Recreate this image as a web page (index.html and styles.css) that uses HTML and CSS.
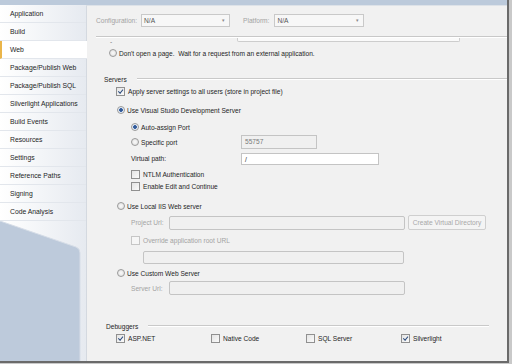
FILE: index.html
```html
<!DOCTYPE html>
<html lang="en">
<head>
  <meta charset="UTF-8">
  <title>Web properties</title>
  <link rel="stylesheet" href="styles.css">
</head>
<body>
  <div class="window">
    <div class="topbar"></div>
    <div class="frame">
      <nav class="sidebar">
        <ul class="tabs">
          <li>Application</li>
          <li>Build</li>
          <li class="active">Web</li>
          <li>Package/Publish Web</li>
          <li>Package/Publish SQL</li>
          <li>Silverlight Applications</li>
          <li>Build Events</li>
          <li>Resources</li>
          <li>Settings</li>
          <li>Reference Paths</li>
          <li>Signing</li>
          <li>Code Analysis</li>
        </ul>
        <div class="fold">
          <svg width="86" height="140" viewBox="0 0 86 140">
            <path d="M0 0 L76 26 Q80 27.5 80 32 L80 140 L0 140 Z" fill="#bdcadb"/>
            <path d="M0 0 L76 26 Q80 27.5 80 32 L80 140" fill="none" stroke="#d6dde7" stroke-width="1"/>
          </svg>
        </div>
      </nav>
      <main class="page">
        <div class="toolbar">
          <span class="muted">Configuration:</span>
          <div class="select config">N/A<span class="caret">&#9662;</span></div>
          <span class="muted">Platform:</span>
          <div class="select platform">N/A<span class="caret">&#9662;</span></div>
        </div>
        <div class="rule"></div>
        <div class="scrolled">
          <span class="dash">-</span>
          <div class="cutbox"></div>
        </div>

        <div class="row dont"><span class="radio"></span>Don't open a page.&nbsp; Wait for a request from an external application.</div>

        <div class="group servers"><span>Servers</span><div class="line"></div></div>
        <div class="row apply"><span class="check on"></span>Apply server settings to all users (store in project file)</div>
        <div class="row vs"><span class="radio on"></span>Use Visual Studio Development Server</div>
        <div class="row sub auto"><span class="radio on"></span>Auto-assign Port</div>
        <div class="row sub port">
          <span class="label"><span class="radio"></span>Specific port</span>
          <div class="field off w-port">55757</div>
        </div>
        <div class="row sub vpath">
          <span class="label">Virtual path:</span>
          <div class="field w-vpath">/</div>
        </div>
        <div class="row sub ntlm"><span class="check"></span>NTLM Authentication</div>
        <div class="row sub edit"><span class="check"></span>Enable Edit and Continue</div>

        <div class="row iis"><span class="radio"></span>Use Local IIS Web server</div>
        <div class="row sub url">
          <span class="label short muted">Project Url:</span>
          <div class="field off w-url"></div>
          <div class="button">Create Virtual Directory</div>
        </div>
        <div class="row sub override muted"><span class="check dis"></span>Override application root URL</div>
        <div class="row sub rooturl"><div class="field off w-root"></div></div>
        <div class="row custom"><span class="radio"></span>Use Custom Web Server</div>
        <div class="row sub server">
          <span class="label short muted">Server Url:</span>
          <div class="field off w-url"></div>
        </div>

        <div class="group debuggers"><span>Debuggers</span><div class="line"></div></div>
        <div class="row debug">
          <span class="opt"><span class="check on"></span>ASP.NET</span>
          <span class="opt"><span class="check"></span>Native Code</span>
          <span class="opt"><span class="check"></span>SQL Server</span>
          <span class="opt"><span class="check on"></span>Silverlight</span>
        </div>
      </main>
    </div>
  </div>
</body>
</html>
```

FILE: styles.css
```css
body {
  margin: 0;
  background: #c9c9c9;
  font-family: "Liberation Sans", Arial, sans-serif;
  font-size: 6.6px;
  color: #1e1e1e;
}
.window {
  width: 507px;
  height: 361px;
  border-right: 2px solid #6a6a6a;
  border-bottom: 2px solid #6a6a6a;
  display: flex;
  flex-direction: column;
  background: #f1f1f1;
  overflow: hidden;
}
.topbar {
  height: 5px;
  background: #bccadb;
}
.frame {
  flex: 1;
  display: flex;
}
.sidebar {
  width: 86px;
  display: flex;
  flex-direction: column;
  background: linear-gradient(to right, #ffffff, #e6eaf0);
}
.tabs {
  list-style: none;
  margin: 0;
  padding: 0;
}
.tabs li {
  height: 17px;
  line-height: 17px;
  padding-left: 10px;
  border-bottom: 1px solid #e2e6ec;
  white-space: nowrap;
  font-size: 6.8px;
}
.tabs li.active {
  background: #ffffff;
  border-left: 2px solid #eab54a;
  padding-left: 8px;
  margin-right: -1px;
  position: relative;
}
.fold {
  flex: 1;
  overflow: hidden;
}
.fold svg {
  display: block;
}
.page {
  flex: 1;
  border-left: 1px solid #d4d9e0;
  border-top: 1px solid #dde2e8;
  padding-left: 9px;
}
.muted {
  color: #a3a3a3;
}
.toolbar {
  display: flex;
  align-items: center;
  height: 13px;
  margin-top: 8px;
}
.select {
  height: 11px;
  line-height: 11px;
  border: 1px solid #c9c9c9;
  background: #f7f7f7;
  padding-left: 2px;
  color: #555;
  display: flex;
  justify-content: space-between;
  box-sizing: content-box;
}
.select .caret {
  color: #8a8a8a;
  font-size: 5px;
  padding-right: 4px;
}
.config {
  width: 85px;
  margin: 0 13px 0 4px;
}
.platform {
  width: 86px;
  margin-left: 5px;
}
.rule {
  height: 1px;
  background: #c8c8c8;
  border-bottom: 1px solid #ffffff;
  margin-top: 9px;
}
.scrolled {
  display: flex;
  height: 6px;
}
.dash {
  margin-left: 14px;
  line-height: 7px;
  color: #777;
}
.cutbox {
  margin-left: 125px;
  width: 221px;
  height: 3px;
  border: 1px solid #cdcdcd;
  border-top: none;
  border-radius: 0 0 2px 2px;
  background: #fafafa;
}
.row {
  display: flex;
  align-items: center;
  height: 12px;
  white-space: nowrap;
}
.sub {
  padding-left: 35px;
}
.radio {
  width: 6px;
  height: 6px;
  border: 1px solid #9a9a9a;
  border-radius: 50%;
  background: radial-gradient(circle, #fafafa, #dcdcdc);
  margin-right: 2px;
  flex: none;
}
.radio.on {
  background: radial-gradient(circle, #2c4e82 0, #3d67a8 1.6px, #e8eef6 2.2px);
}
.check {
  width: 7px;
  height: 7px;
  border: 1px solid #909090;
  background: linear-gradient(135deg, #e4e4e4, #fafafa);
  margin-right: 3px;
  flex: none;
  position: relative;
}
.check.dis {
  border-color: #c6c6c6;
  background: #f6f6f6;
}
.check.on::after {
  content: "";
  position: absolute;
  left: 1px;
  top: 0px;
  width: 4px;
  height: 2px;
  border-left: 1px solid #2a4a7c;
  border-bottom: 1px solid #2a4a7c;
  transform: rotate(-50deg) translate(-1px, 1px);
}
.dont {
  margin-top: 3px;
  padding-left: 13px;
}
.group {
  display: flex;
  align-items: center;
  height: 12px;
}
.group .line {
  flex: 1;
  height: 1px;
  background: #c9c9c9;
  border-bottom: 1px solid #fff;
  margin-left: 10px;
}
.servers {
  margin-top: 14px;
  padding-left: 8px;
}
.apply {
  padding-left: 20px;
}
.vs {
  margin-top: 7px;
  padding-left: 21px;
}
.auto {
  margin-top: 5px;
}
.port {
  margin-top: 2px;
  height: 14px;
}
.label {
  display: flex;
  align-items: center;
  width: 110px;
}
.label.short {
  width: 38px;
}
.field {
  height: 12px;
  line-height: 12px;
  border: 1px solid #c4c4c4;
  background: #ffffff;
  padding-left: 3px;
  box-sizing: border-box;
}
.field.off {
  background: #f0f0f0;
  color: #7a7a7a;
}
.w-port {
  width: 76px;
  height: 14px;
  line-height: 12px;
}
.w-vpath {
  width: 138px;
}
.vpath {
  margin-top: 3px;
  height: 13px;
}
.ntlm {
  margin-top: 3px;
}
.edit {
  margin-top: 0;
}
.iis {
  margin-top: 8px;
  padding-left: 21px;
}
.url {
  margin-top: 3px;
  height: 15px;
}
.w-url {
  width: 236px;
  height: 14px;
  border-radius: 2px;
}
.button {
  margin-left: 3px;
  width: 78px;
  height: 15px;
  line-height: 13px;
  border: 1px solid #cfcfcf;
  border-radius: 2px;
  box-sizing: border-box;
  text-align: center;
  color: #a8a8a8;
  background: #f4f4f4;
}
.override {
  margin-top: 4px;
}
.rooturl {
  margin-top: 5px;
  height: 13px;
  padding-left: 47px;
}
.w-root {
  width: 261px;
  height: 13px;
  border-radius: 2px;
}
.custom {
  margin-top: 3px;
  padding-left: 21px;
}
.server {
  margin-top: 2px;
  height: 14px;
}
.debuggers {
  margin-top: 25px;
  padding-left: 10px;
  padding-right: 18px;
}
.debug {
  margin-top: 0;
  padding-left: 20px;
}
.opt {
  display: flex;
  align-items: center;
  width: 95px;
}
```
